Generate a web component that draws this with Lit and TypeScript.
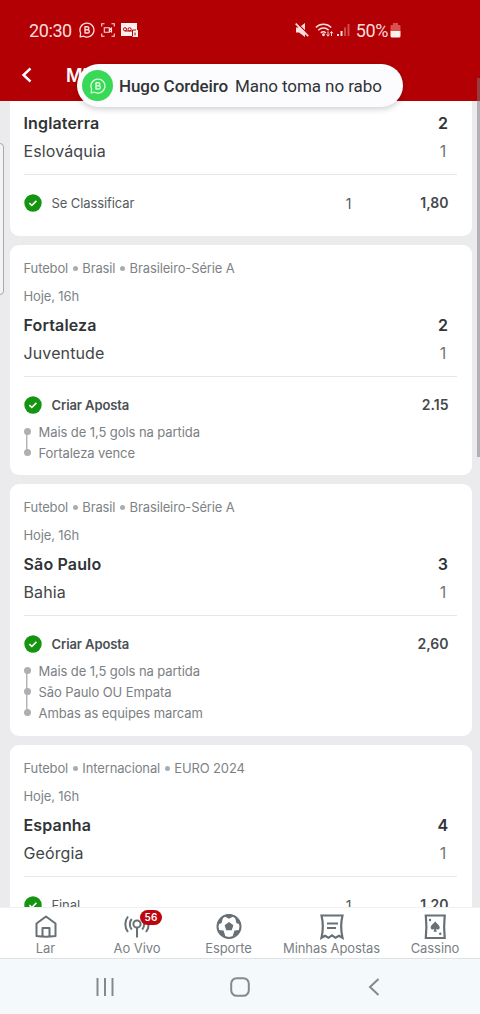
import { LitElement, html, css, svg } from "lit";
import { customElement, property } from "lit/decorators.js";

interface Bet {
  league: string[];
  when: string;
  home: [string, string];
  away: [string, string];
  label: string;
  stake?: string;
  odds: string;
  legs?: string[];
  tail: number;
}

const BETS: Bet[] = [
  { league: [], when: "", home: ["Inglaterra", "2"], away: ["Eslováquia", "1"], label: "Se Classificar", stake: "1", odds: "1,80", tail: 19 },
  { league: ["Futebol", "Brasil", "Brasileiro-Série A"], when: "Hoje, 16h", home: ["Fortaleza", "2"], away: ["Juventude", "1"], label: "Criar Aposta", odds: "2.15", legs: ["Mais de 1,5 gols na partida", "Fortaleza vence"], tail: 12 },
  { league: ["Futebol", "Brasil", "Brasileiro-Série A"], when: "Hoje, 16h", home: ["São Paulo", "3"], away: ["Bahia", "1"], label: "Criar Aposta", odds: "2,60", legs: ["Mais de 1,5 gols na partida", "São Paulo OU Empata", "Ambas as equipes marcam"], tail: 13 },
  { league: ["Futebol", "Internacional", "EURO 2024"], when: "Hoje, 16h", home: ["Espanha", "4"], away: ["Geórgia", "1"], label: "Final", stake: "1", odds: "1,20", tail: 19 },
];

const bubble = svg`
  <path d="M1.2 14.8 L1.6 11 A7 7 0 1 1 4.6 14.2 Z" fill="none" stroke="currentColor" stroke-width="1.3" stroke-linejoin="round"/>
  <path d="M6 4.8h2.3a1.5 1.5 0 0 1 0 3H6zM6 7.8h2.7a1.6 1.6 0 0 1 0 3.2H6z" fill="none" stroke="currentColor" stroke-width="1.4" stroke-linejoin="round"/>`;

@customElement("bet-card")
class BetCard extends LitElement {
  @property({ attribute: false }) bet!: Bet;

  static styles = css`
    :host { display: block; background: #fff; border-radius: 9px; padding: 9px 15px 0 14px; }
    .meta { height: 28px; display: flex; align-items: center; font-size: 13px; letter-spacing: -0.13px; color: #7d8385; }
    .dot { width: 5px; height: 5px; border-radius: 50%; background: #a9adb0; margin: 1px 4.6px 0 4.6px; }
    .team { height: 28px; display: flex; align-items: center; justify-content: space-between; padding-right: 8px; font-size: 16px; letter-spacing: 0.12px; color: #414648; }
    .team.win { font-weight: 600; letter-spacing: 0.15px; color: #303436; }
    .score { width: 11px; text-align: center; }
    .team:not(.win) .score { color: #707577; }
    .gap { height: 1px; }
    .rule { height: 1px; background: #e6e7e9; margin: 9px 0 14px; }
    .pick { height: 28px; display: flex; align-items: center; font-size: 13px; letter-spacing: -0.1px; color: #565b5e; padding-right: 8px; }
    .pick svg { width: 18px; height: 18px; margin-right: 10px; flex: none; }
    .pick.combo .label { font-weight: 600; color: #4a4f52; }
    .stake { margin-left: auto; width: 10px; font-size: 14px; text-align: center; }
    .odds { width: 95px; text-align: right; font-size: 14px; font-weight: 600; letter-spacing: 0; color: #44494c; padding-bottom: 2px; }
    .combo .odds { margin-left: auto; }
    .legs { padding-top: 2px; display: grid; grid-template-columns: 15px 1fr; }
    .rail { padding: 7px 0 7px; display: flex; flex-direction: column; justify-content: space-between; width: 7px;
      background: linear-gradient(#b4b7ba, #b4b7ba) center / 1.5px calc(100% - 20px) no-repeat; }
    .rail i { width: 7px; height: 7px; border-radius: 50%; background: #adb0b2; }
    .leg { height: 21px; display: flex; align-items: center; font-size: 13px; color: #7b8083; letter-spacing: -0.08px; }
    .tail { display: block; }
  `;

  render() {
    const b = this.bet;
    return html`
      ${b.league.length
        ? html`<div class="meta">${b.league.map((l, i) => html`${i ? html`<span class="dot"></span>` : ""}<span>${l}</span>`)}</div>
            <div class="meta">${b.when}</div><div class="gap"></div>`
        : ""}
      <div class="team win"><span>${b.home[0]}</span><span class="score">${b.home[1]}</span></div>
      <div class="team"><span>${b.away[0]}</span><span class="score">${b.away[1]}</span></div>
      <div class="rule"></div>
      <div class="pick ${b.legs ? "combo" : ""}">
        <svg viewBox="0 0 18 18"><circle cx="9" cy="9" r="8.7" fill="#159412"/><path d="M5.4 9.2l2.4 2.3 4.6-4.6" fill="none" stroke="#fff" stroke-width="1.6"/></svg>
        <span class="label">${b.label}</span>
        ${b.stake ? html`<span class="stake">${b.stake}</span>` : ""}
        <span class="odds">${b.odds}</span>
      </div>
      ${b.legs
        ? html`<div class="legs"><div class="rail">${b.legs.map(() => html`<i></i>`)}</div>
            <div>${b.legs.map((l) => html`<div class="leg">${l}</div>`)}</div></div>`
        : ""}
      <div class="tail" style="height:${b.tail}px"></div>
    `;
  }
}

@customElement("app-root")
class AppRoot extends LitElement {
  static styles = css`
    :host { display: flex; flex-direction: column; position: relative; width: 480px; height: 1014px; overflow: hidden;
      background: #ebeaed; font-family: Inter, "Liberation Sans", sans-serif; }
    svg { display: block; flex: none; }
    .top { height: 101px; flex: none; background: #b30004; color: #fbdedb; }
    .status { height: 60px; display: flex; align-items: center; gap: 6px; box-sizing: border-box; padding: 0 79px 0 29px; font: 18px Roboto, sans-serif; }
    .status .clock { width: 44px; letter-spacing: -0.4px; }
    .status .power { letter-spacing: -0.4px; }
    .status .bars { margin-left: -3px; }
    .status .battery { margin-left: -4px; }
    .spring { flex: 1; }
    .head { display: flex; align-items: center; height: 30px; padding-left: 21px; color: #fff; }
    .head b { margin-left: 33px; font-size: 18px; font-weight: 600; }
    .toast { position: absolute; left: 77px; top: 64px; width: 326px; height: 43px; border-radius: 22px; background: #fcfcfe;
      display: flex; align-items: center; box-sizing: border-box; padding-left: 5px; font: 17px Roboto, sans-serif; letter-spacing: -0.08px; color: #303236;
      box-shadow: 0 2px 6px rgba(0, 0, 0, 0.2); white-space: nowrap; z-index: 2; }
    .avatar { width: 31px; height: 31px; border-radius: 50%; background: #38d957; color: #d8ffdc; display: grid; place-items: center; margin-right: 6px; }
    .toast strong { font-weight: 500; margin-right: 7px; }
    .list { flex: 1; min-height: 0; overflow: hidden; display: flex; flex-direction: column; gap: 9px; padding: 0 8.5px 0 9.5px; }
    bet-card { flex: none; }
    bet-card.first { border-radius: 0 0 9px 9px; padding-top: 8px; }
    .tabs { height: 52px; flex: none; box-sizing: border-box; background: #fff; border-top: 1px solid #eff0f1; border-bottom: 1px solid #dfe2e4;
      display: grid; grid-template-columns: 91px 92px 91px 115px 92px; }
    .tab { display: flex; flex-direction: column; align-items: center; font-size: 13px; letter-spacing: -0.08px; color: #7a8083; padding-top: 4px; white-space: nowrap; position: relative; }
    .tab svg { width: 28px; height: 28px; color: #667075; }
    .tab span { line-height: 16px; }
    .tab .count { position: absolute; left: 49px; top: 2px; width: 22px; height: 15px; border-radius: 8px; background: #bd0510; color: #fff;
      font-size: 10px; font-weight: 600; line-height: 15px; text-align: center; letter-spacing: 0.2px; }
    .sys { height: 55px; flex: none; background: #f4fafc; display: grid; grid-template-columns: 210px 59px 210px; place-items: center; color: #85898c; padding-top: 1px; box-sizing: border-box; }
    .edge { position: absolute; left: -8px; top: 143px; width: 10px; height: 150px; border: 1px solid #a9a8ab; border-radius: 4px; background: #f3f2f4; }
    .scroll { position: absolute; right: 0; top: 78px; width: 3.5px; height: 379px; background: rgba(125, 118, 126, 0.5); z-index: 3; }
  `;

  render() {
    return html`
      <div class="top">
        <div class="status">
          <span class="clock">20:30</span>
          <svg width="16" height="16" viewBox="0 0 16 16">${bubble}</svg>
          <svg width="14" height="14" viewBox="0 0 14 14" fill="none" stroke="currentColor" stroke-width="1.1"><path d="M.7 3.5V.7h2.8M10.500.7h2.800v2.800M13.300 10.500v2.800h-2.800M3.500 13.300H.7v-2.800M3.300 4.800h5v4.400h-5zM8.300 6.500l2.200-1.400v3.800L8.300 7.500"/></svg>
          <svg width="17" height="14" viewBox="0 0 17 14"><path d="M0 0h16v7h1v7h-6v-1H0z" fill="#fff1ee"/><g fill="none" stroke="#b30004" stroke-width="1"><circle cx="4" cy="6.300" r="1.600"/><circle cx="8.600" cy="6.300" r="1.600"/><path d="M4 8h7.500M11.500 13.500V7H15M14 9.500v3"/></g></svg>
          <span class="spring"></span>
          <svg width="14" height="14" viewBox="0 0 14 14"><path d="M1 4.500h3L10 0v14L4 9.500H1z" fill="currentColor"/><path d="M1.800 0l13 12.600" stroke="#b30004" stroke-width="1.300"/><path d="M.7.700l12.500 12.500" stroke="currentColor" stroke-width="1.700"/></svg>
          <svg width="19" height="14" viewBox="0 0 19 14" fill="none" stroke="currentColor" stroke-width="1.500"><path d="M.8 4.500a11 11 0 0 1 15.400 0M3.300 7.200a7.500 7.500 0 0 1 10.400 0M5.800 9.800a4 4 0 0 1 5 0"/><circle cx="8.500" cy="11.800" r=".7"/><path d="M13 8.500v4.500M11.500 11.500l1.500 1.700 1.500-1.700M16.500 13V8.700M15 10.300l1.500-1.700 1.500 1.700" stroke-width="1"/></svg>
          <svg class="bars" width="13" height="14" viewBox="0 0 13 14" fill="currentColor"><path d="M0 11h2v2H0zM3.500 8h2v5h-2z"/><path d="M7 4.500h2V13H7zM10.500 1h2v12h-2z" opacity=".35"/></svg>
          <span class="power">50%</span>
          <svg class="battery" width="11" height="15" viewBox="0 0 11 15"><path d="M3 0h5v2h1.500a1 1 0 0 1 1 1v5H.5V3a1 1 0 0 1 1-1H3z" fill="#d9504c"/><path d="M.5 8h10v5a1.500 1.500 0 0 1-1.500 1.500H2A1.500 1.500 0 0 1 .5 13z" fill="#ffefec"/></svg>
        </div>
        <div class="head">
          <svg width="12" height="16" viewBox="0 0 12 16"><path d="M9.500 1.500L2.500 8l7 6.500" fill="none" stroke="currentColor" stroke-width="2.400"/></svg>
          <b>Minhas Apostas</b>
        </div>
      </div>
      <div class="list">${BETS.map((b, i) => html`<bet-card class=${i ? "" : "first"} .bet=${b}></bet-card>`)}</div>
      <div class="tabs">
        <div class="tab"><svg viewBox="0 0 28 28" fill="none" stroke="currentColor" stroke-width="2" stroke-linejoin="round"><path d="M4.500 11.500L14 4.500l9.500 7V24q-9.500 1.600-19 0zM10.500 24.500V16h7v8.500"/></svg><span>Lar</span></div>
        <div class="tab"><svg viewBox="0 0 28 28" fill="none" stroke="currentColor" stroke-width="2"><circle cx="14" cy="12" r="3.600"/><path d="M14 15.600v9.800M8.800 7a8 8 0 0 0 0 10.500M19.200 7a8 8 0 0 1 0 10.500M5 4.500a12.500 12.500 0 0 0 0 15.500M23 4.500a12.500 12.500 0 0 1 0 15.500"/></svg><span>Ao Vivo</span><span class="count">56</span></div>
        <div class="tab"><svg viewBox="0 0 28 28"><circle cx="14" cy="14.500" r="11.500" fill="none" stroke="currentColor" stroke-width="2"/><path fill="currentColor" d="M14 10l4.400 3.200-1.700 5.100h-5.400l-1.700-5.100zM8 3.500l6 3.300 6-3.300-6-1.500zM2 12.500l4.500-1.200L8 5.500 4 7.500zM26 12.500l-4.500-1.200L20 5.500l4 2zM3 18l5.500.5 2 6-5-2zM25 18l-5.500.5-2 6 5-2z"/></svg><span>Esporte</span></div>
        <div class="tab"><svg viewBox="0 0 28 28" fill="none" stroke="currentColor" stroke-width="2.200"><path d="M3.500 3.500h21c-1.700 7-1.700 15 0 22.300l-3.500-2-3.500 2-3.500-2.500-3.500 2.500L7 23.800l-3.500 2c1.700-7.500 1.700-15.300 0-22.300zM9 11.500h11M9 16h9"/></svg><span>Minhas Apostas</span></div>
        <div class="tab"><svg viewBox="0 0 28 28"><path d="M4.800 3.500h18.900c-.7 7-.7 15.500 0 22.500H4.800c.7-6.500.7-15.500 0-22.500z" fill="none" stroke="currentColor" stroke-width="2.200"/><path fill="currentColor" d="M14.200 9.200c1 2.200 4.500 3.500 4.500 6.200 0 2.200-2.600 2.800-3.700 1.300l.8 3h-3.200l.8-3c-1.100 1.500-3.700.9-3.700-1.300 0-2.700 3.500-4 4.500-6.200z"/><circle cx="9" cy="8" r="1.200" fill="currentColor"/><circle cx="19.200" cy="21.700" r="1.200" fill="currentColor"/></svg><span>Cassino</span></div>
      </div>
      <div class="sys">
        <svg width="18" height="18" viewBox="0 0 18 18"><path d="M1.500 0v18M9 0v18M16.500 0v18" stroke="currentColor" stroke-width="2"/></svg>
        <svg width="20" height="20" viewBox="0 0 20 20"><rect x="1.200" y="1.200" width="17.600" height="17.600" rx="5.500" fill="none" stroke="currentColor" stroke-width="2"/></svg>
        <svg width="12" height="18" viewBox="0 0 12 18"><path d="M10.500 1L2 9l8.500 8" fill="none" stroke="currentColor" stroke-width="2"/></svg>
      </div>
      <div class="edge"></div>
      <div class="scroll"></div>
      <div class="toast">
        <span class="avatar"><svg width="16" height="16" viewBox="0 0 16 16">${bubble}</svg></span>
        <strong>Hugo Cordeiro</strong><span>Mano toma no rabo</span>
      </div>
    `;
  }
}
